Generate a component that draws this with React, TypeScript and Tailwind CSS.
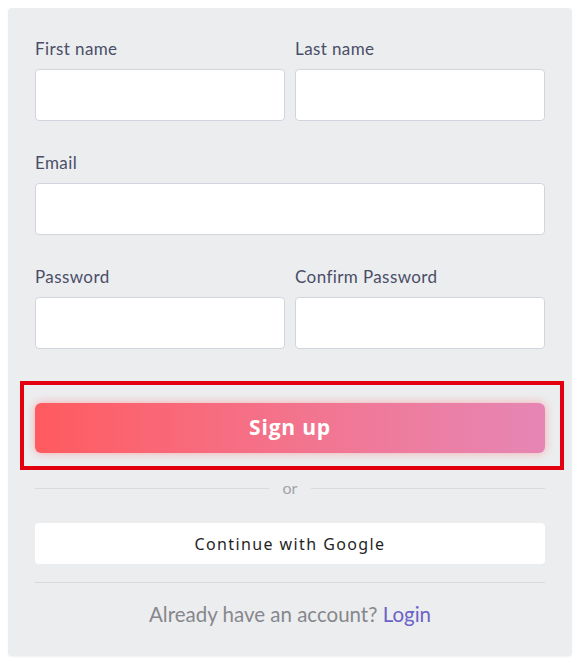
import React from "react";

function Field({ label }: { label: string }) {
  return (
    <div className="flex flex-col">
      <label className="h-6 text-[17px] leading-6 tracking-[0.4px] text-[#4a4d68]">
        {label}
      </label>
      <input className="mt-2 h-[52px] w-full rounded-[4px] border border-[#d3d5de] bg-white outline-none" />
    </div>
  );
}

export default function App() {
  return (
    <div className="min-h-[663px] bg-white p-2 font-['Lato','Noto_Sans',sans-serif]">
      <div className="w-[564px] rounded-[4px] bg-[#ecedef] px-[27px] pb-[28px] pt-[29px] shadow-[0_1px_2px_rgba(0,0,0,0.06)]">
        <div className="grid grid-cols-2 gap-x-[10px] gap-y-[30px]">
          <Field label="First name" />
          <Field label="Last name" />
          <div className="col-span-2">
            <Field label="Email" />
          </div>
          <Field label="Password" />
          <Field label="Confirm Password" />
        </div>

        <div className="relative mt-[54px]">
          <div className="pointer-events-none absolute -bottom-[17px] -left-[15px] -right-[19px] -top-[22px] border-4 border-[#e3000f]" />
          <button className="flex h-[50px] w-full items-center justify-center rounded-[6px] bg-gradient-to-r from-[#ff5a5f] to-[#e686b5] font-['Open_Sans',sans-serif] text-[21px] font-bold tracking-[0.8px] text-white shadow-[0_0_10px_rgba(255,90,95,0.45)]">
            Sign up
          </button>
        </div>

        <div className="mt-[25px] flex h-5 items-center gap-[14px]">
          <div className="h-px flex-1 bg-[#d9dadd]" />
          <span className="text-[16px] leading-5 text-[#a3a4a8]">or</span>
          <div className="h-px flex-1 bg-[#d9dadd]" />
        </div>

        <button className="mt-[25px] flex h-[41px] w-full items-center justify-center rounded-[4px] bg-white font-['Noto_Sans',sans-serif] text-[16px] font-normal tracking-[1.4px] text-[#1f1f1f]">
          Continue with Google
        </button>

        <div className="mt-[18px] h-px bg-[#d9dadd]" />

        <p className="mt-[17px] text-center text-[20.5px] leading-7 text-[#86878c]">
          Already have an account? <span className="text-[#6b63c8]">Login</span>
        </p>
      </div>
    </div>
  );
}
